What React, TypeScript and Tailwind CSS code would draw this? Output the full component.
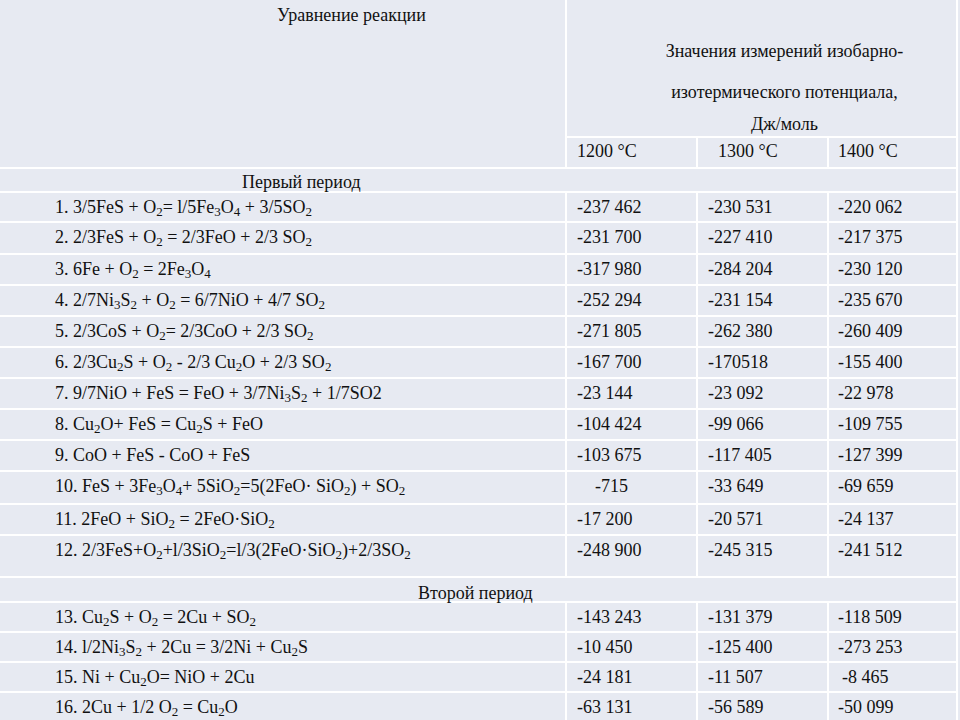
const rows1: [string, string, string, string][] = [
  ["1. 3/5FeS + O_2= l/5Fe_3O_4 + 3/5SO_2", "-237 462", "-230 531", "-220 062"],
  ["2. 2/3FeS + O_2 = 2/3FeO + 2/3 SO_2", "-231 700", "-227 410", "-217 375"],
  ["3. 6Fe + O_2 = 2Fe_3O_4", "-317 980", "-284 204", "-230 120"],
  ["4. 2/7Ni_3S_2 + O_2 = 6/7NiO + 4/7 SO_2", "-252 294", "-231 154", "-235 670"],
  ["5. 2/3CoS + O_2= 2/3CoO + 2/3 SO_2", "-271 805", "-262 380", "-260 409"],
  ["6. 2/3Cu_2S + O_2 - 2/3 Cu_2O + 2/3 SO_2", "-167 700", "-170518", "-155 400"],
  ["7. 9/7NiO + FeS = FeO + 3/7Ni_3S_2 + 1/7SO2", "-23 144", "-23 092", "-22 978"],
  ["8. Cu_2O+ FeS = Cu_2S + FeO", "-104 424", "-99 066", "-109 755"],
  ["9. CoO + FeS - CoO + FeS", "-103 675", "-117 405", "-127 399"],
  ["10. FeS + 3Fe_3O_4+ 5SiO_2=5(2FeO· SiO_2) + SO_2", "-715", "-33 649", "-69 659"],
  ["11. 2FeO + SiO_2 = 2FeO·SiO_2", "-17 200", "-20 571", "-24 137"],
  ["12. 2/3FeS+O_2+l/3SiO_2=l/3(2FeO·SiO_2)+2/3SO_2", "-248 900", "-245 315", "-241 512"],
];

const rows2: [string, string, string, string][] = [
  ["13. Cu_2S + O_2 = 2Cu + SO_2", "-143 243", "-131 379", "-118 509"],
  ["14. l/2Ni_3S_2 + 2Cu = 3/2Ni + Cu_2S", "-10 450", "-125 400", "-273 253"],
  ["15. Ni + Cu_2O= NiO + 2Cu", "-24 181", "-11 507", "-8 465"],
  ["16. 2Cu + 1/2 O_2 = Cu_2O", "-63 131", "-56 589", "-50 099"],
];

function Formula({ text }: { text: string }) {
  const parts = text.split(/_(\d)/);
  return (
    <>
      {parts.map((p, i) =>
        i % 2 === 1 ? (
          <sub key={i} className="text-[13px]">{p}</sub>
        ) : (
          <span key={i}>{p}</span>
        )
      )}
    </>
  );
}

const cell = "bg-[#e7eaf2] pt-[2px] whitespace-nowrap";

function DataRow({ row }: { row: [string, string, string, string] }) {
  const [eq, a, b, c] = row;
  return (
    <>
      <div className={`${cell} pl-[55px]`}>
        <Formula text={eq} />
      </div>
      <div className={`${cell} ${a === "-715" ? "pl-[28px]" : "pl-[10px]"}`}>{a}</div>
      <div className={`${cell} pl-[10px]`}>{b}</div>
      <div className={`${cell} ${c === "-8 465" ? "pl-[13px]" : "pl-[9px]"}`}>{c}</div>
    </>
  );
}

export default function App() {
  return (
    <div className="w-[960px] h-[720px] overflow-hidden bg-[#e7eaf2] font-['Liberation_Serif',serif] text-[18px] leading-[24px] text-[#111111]">
      <div className="grid w-[958px] bg-white pr-[2px] gap-[2px] grid-cols-[565px_129px_129px_127px] grid-rows-[136px_29px_22px_28px_30px_29px_29px_29px_29px_29px_29px_29px_31px_29px_40px_23px_28px_28px_28px_40px]">
        <div className="row-span-2 bg-[#e7eaf2] pt-[3px] pl-[277px]">Уравнение реакции</div>
        <div className="col-span-3 bg-[#e7eaf2] flex flex-col items-center pl-[46px] pt-[39px]">
          <div>Значения измерений изобарно-</div>
          <div className="mt-[17px]">изотермического потенциала,</div>
          <div className="mt-[8px]">Дж/моль</div>
        </div>
        <div className="bg-[#e7eaf2] pt-[1px] pl-[10px]">1200 °C</div>
        <div className="bg-[#e7eaf2] pt-[1px] pl-[20px]">1300 °C</div>
        <div className="bg-[#e7eaf2] pt-[1px] pl-[9px]">1400 °C</div>

        <div className="col-span-4 bg-[#e7eaf2] pt-[1px] pl-[242px]">Первый период</div>
        {rows1.map((r) => (
          <DataRow key={r[0]} row={r} />
        ))}

        <div className="col-span-4 bg-[#e7eaf2] pt-[3px] pl-[418px]">Второй период</div>
        {rows2.map((r) => (
          <DataRow key={r[0]} row={r} />
        ))}
      </div>
    </div>
  );
}
